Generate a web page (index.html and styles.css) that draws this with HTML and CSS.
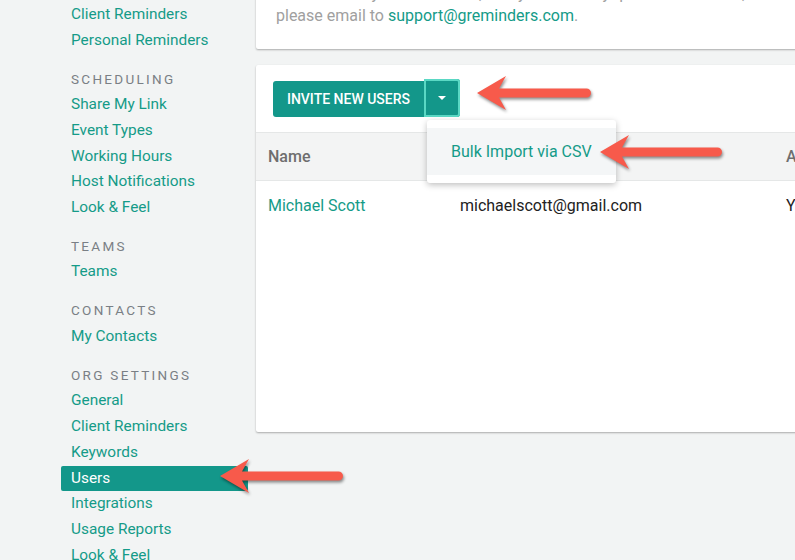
FILE: index.html
```html
<!DOCTYPE html>
<html lang="en">
<head>
  <meta charset="UTF-8">
  <meta name="viewport" content="width=device-width, initial-scale=1.0">
  <title>Users - Org Settings</title>
  <link rel="stylesheet" href="styles.css">
</head>
<body>
  <div class="page">
    <nav class="sidebar">
      <a class="nav-link" href="#">Client Reminders</a>
      <a class="nav-link" href="#">Personal Reminders</a>

      <div class="nav-heading">Scheduling</div>
      <a class="nav-link" href="#">Share My Link</a>
      <a class="nav-link" href="#">Event Types</a>
      <a class="nav-link" href="#">Working Hours</a>
      <a class="nav-link" href="#">Host Notifications</a>
      <a class="nav-link" href="#">Look &amp; Feel</a>

      <div class="nav-heading">Teams</div>
      <a class="nav-link" href="#">Teams</a>

      <div class="nav-heading">Contacts</div>
      <a class="nav-link" href="#">My Contacts</a>

      <div class="nav-heading">Org Settings</div>
      <a class="nav-link" href="#">General</a>
      <a class="nav-link" href="#">Client Reminders</a>
      <a class="nav-link" href="#">Keywords</a>
      <a class="nav-link active" href="#">Users</a>
      <a class="nav-link" href="#">Integrations</a>
      <a class="nav-link" href="#">Usage Reports</a>
      <a class="nav-link" href="#">Look &amp; Feel</a>
    </nav>

    <main class="main">
      <div class="card notice">
        <p>To invite many users at once, or if you have any questions about it,</p>
        <p>please email to <a href="#">support@greminders.com</a>.</p>
      </div>

      <div class="card users">
        <div class="toolbar">
          <div class="split">
            <button class="btn-main">Invite new users</button>
            <button class="btn-caret"><span class="caret"></span></button>
            <div class="menu">
              <a class="menu-item" href="#">Bulk Import via CSV</a>
            </div>
          </div>
        </div>

        <table class="user-table">
          <thead>
            <tr>
              <th class="col-name">Name</th>
              <th class="col-email">Email</th>
              <th>Admin</th>
            </tr>
          </thead>
          <tbody>
            <tr>
              <td><a href="#">Michael Scott</a></td>
              <td class="email">michaelscott@gmail.com</td>
              <td class="email">Yes</td>
            </tr>
          </tbody>
        </table>
      </div>
    </main>

    <!-- annotation arrows -->
    <svg class="arrow arrow-invite" width="130" height="44" viewBox="0 0 130 44">
      <path d="M3 20 L32 3 L25 15.5 L112.5 15.5 A4.5 4.5 0 0 1 112.5 24.5 L25 24.5 L32 37 Z"/>
    </svg>
    <svg class="arrow arrow-csv" width="130" height="44" viewBox="0 0 130 44">
      <path d="M3 20 L32 3 L25 15.5 L120.5 15.5 A4.5 4.5 0 0 1 120.5 24.5 L25 24.5 L32 37 Z"/>
    </svg>
    <svg class="arrow arrow-users" width="130" height="44" viewBox="0 0 130 44">
      <path d="M3 20 L32 3 L25 15.5 L121.5 15.5 A4.5 4.5 0 0 1 121.5 24.5 L25 24.5 L32 37 Z"/>
    </svg>
  </div>
</body>
</html>
```

FILE: styles.css
```css
body {
  margin: 0;
  background-color: #f2f4f4;
  font-family: Roboto, "Liberation Sans", Arial, sans-serif;
  font-size: 16px;
  overflow: hidden;
}
a {
  color: #159b88;
  text-decoration: none;
}
.page {
  position: relative;
  display: flex;
  height: 560px;
  overflow: hidden;
}

/* sidebar */
.sidebar {
  flex: none;
  width: 256px;
  padding: 2px 0 0 61px;
  box-sizing: border-box;
  font-size: 15.4px;
}
.nav-link {
  display: block;
  width: 187px;
  padding-left: 10px;
  box-sizing: border-box;
  line-height: 25.7px;
  border-radius: 2px;
}
.nav-link.active {
  background-color: #13978a;
  color: white;
}
.nav-heading {
  margin: 14.2px 0 2.6px;
  padding-left: 10px;
  line-height: 22px;
  font-size: 13.5px;
  letter-spacing: 2.3px;
  text-transform: uppercase;
  color: #7a7f85;
}

/* main column */
.main {
  flex: none;
  width: 570px;
}
.card {
  background-color: white;
  border-radius: 2px;
  box-shadow: 0 1px 2px rgba(0, 0, 0, 0.3);
}
.notice {
  margin-top: -31px;
  padding: 14px 20px 22px;
  color: #a0a0a0;
  white-space: nowrap;
  overflow: hidden;
}
.notice p {
  margin: 0;
  line-height: 22px;
}
.users {
  margin-top: 16px;
  height: 367px;
  padding-top: 14px;
  box-sizing: border-box;
}
.toolbar {
  padding-left: 17px;
}
.split {
  position: relative;
  display: inline-flex;
  align-items: flex-end;
}
.btn-main {
  height: 36px;
  width: 151px;
  border: none;
  border-radius: 3px 0 0 3px;
  background-color: #13978a;
  color: white;
  font-family: inherit;
  font-size: 14px;
  font-weight: 500;
  text-transform: uppercase;
  padding: 0;
}
.btn-caret {
  display: flex;
  align-items: center;
  justify-content: center;
  height: 38px;
  width: 36px;
  border: none;
  border-radius: 0 3px 3px 0;
  background-color: #13978a;
  box-shadow: inset 0 0 0 2px #5ad8c4;
  padding: 0;
}
.caret {
  width: 0;
  height: 0;
  border-left: 4px solid transparent;
  border-right: 4px solid transparent;
  border-top: 4px solid white;
}
.menu {
  position: absolute;
  left: 154px;
  top: 41px;
  width: 189px;
  padding: 8px 0;
  background-color: white;
  border-radius: 3px;
  box-shadow: 0 2px 6px rgba(0, 0, 0, 0.25);
  z-index: 2;
}
.menu-item {
  display: block;
  padding-left: 24px;
  line-height: 47px;
  background-color: #f4f6f7;
}

/* table */
.user-table {
  width: 100%;
  margin-top: 15px;
  border-collapse: collapse;
  table-layout: fixed;
}
.user-table th {
  height: 47px;
  padding: 0 0 0 12px;
  background-color: #f3f4f4;
  border-top: 1px solid #e5e7e7;
  border-bottom: 1px solid #e5e7e7;
  text-align: left;
  font-weight: 500;
  color: #6e6e6e;
  white-space: nowrap;
}
.user-table td {
  height: 48px;
  padding: 0 0 0 12px;
  white-space: nowrap;
}
.col-name {
  width: 180px;
}
.col-email {
  width: 314px;
}
.email {
  color: #222;
}

/* annotation arrows */
.arrow {
  position: absolute;
  fill: #f75a4b;
  filter: drop-shadow(1px 2px 1.5px rgba(0, 0, 0, 0.45));
  z-index: 3;
}
.arrow-invite {
  left: 474px;
  top: 73px;
}
.arrow-csv {
  left: 597px;
  top: 132px;
}
.arrow-users {
  left: 217px;
  top: 456px;
}
```
